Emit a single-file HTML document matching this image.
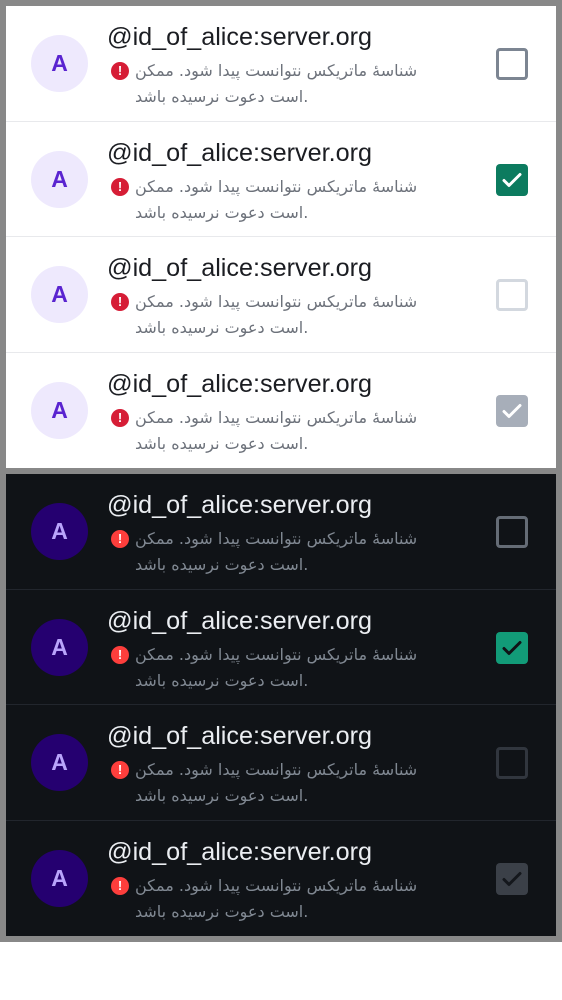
<!DOCTYPE html>
<html><head><meta charset="utf-8"><style>
*{margin:0;padding:0;box-sizing:border-box}
body{width:562px;height:1000px;background:#fff;position:relative;font-family:"Liberation Sans","DejaVu Sans",sans-serif;overflow:hidden}
.frame{position:absolute;left:0;width:562px;background:#888}
.panel{position:absolute;left:6px;width:550px}
.row{position:absolute;left:0;width:550px;height:115.5px}
.sep{position:absolute;left:0;width:550px;height:1px;bottom:0}
.av{position:absolute;left:25px;top:29px;width:57px;height:57px;border-radius:50%;text-align:center;line-height:57px;font-weight:bold;font-size:23px}
.t{position:absolute;left:101px;top:17px;font-size:25.2px;white-space:nowrap}
.ic{position:absolute;left:105px;top:56px;width:18px;height:18px;border-radius:50%;color:#fff;font-weight:bold;font-size:13px;text-align:center;line-height:18px}
.d{position:absolute;left:129px;top:52px;width:300px;font-size:16px;line-height:26px;font-family:"DejaVu Sans",sans-serif;direction:ltr;text-align:left}
.cb{position:absolute;left:490px;top:42px;width:32px;height:32px;border-radius:4px}
.cb svg{position:absolute;left:4px;top:4px}
.L{background:#fff}.L .sep{background:#e8e9ec}.L .t{color:#1b1d22}.L .d{color:#6d727b}.L .av{background:#eee9fd;color:#5a24d0}.L .ic{background:#d61d36}
.D{background:#101317}.D .sep{background:#22262d}.D .t{color:#ebeef2}.D .d{color:#808892}.D .av{background:#250070;color:#b9a4fb}.D .ic{background:#fd3e3c}
</style></head><body>
<div class="frame" style="top:0;height:474px"></div>
<div class="frame" style="top:468px;height:474px"></div>

<div class="panel L" style="top:6px;height:462px">
 <div class="row" style="top:0"><div class="av">A</div><div class="t">@id_of_alice:server.org</div><div class="ic">!</div><div class="d">شناسهٔ ماتریکس نتوانست پیدا شود. ممکن است دعوت نرسیده باشد.</div><div class="cb" style="border:3px solid #7c8592"></div><div class="sep"></div></div>
 <div class="row" style="top:115.5px"><div class="av">A</div><div class="t">@id_of_alice:server.org</div><div class="ic">!</div><div class="d">شناسهٔ ماتریکس نتوانست پیدا شود. ممکن است دعوت نرسیده باشد.</div><div class="cb" style="background:#0c7b5f"><svg width="24" height="24" viewBox="0 0 24 24"><path d="M4 12.5l5 5L20 6.5" fill="none" stroke="#fff" stroke-width="3" stroke-linecap="round" stroke-linejoin="round"/></svg></div><div class="sep"></div></div>
 <div class="row" style="top:231px"><div class="av">A</div><div class="t">@id_of_alice:server.org</div><div class="ic">!</div><div class="d">شناسهٔ ماتریکس نتوانست پیدا شود. ممکن است دعوت نرسیده باشد.</div><div class="cb" style="border:3px solid #d3d8df"></div><div class="sep"></div></div>
 <div class="row" style="top:346.5px"><div class="av">A</div><div class="t">@id_of_alice:server.org</div><div class="ic">!</div><div class="d">شناسهٔ ماتریکس نتوانست پیدا شود. ممکن است دعوت نرسیده باشد.</div><div class="cb" style="background:#a7aeb9"><svg width="24" height="24" viewBox="0 0 24 24"><path d="M4 12.5l5 5L20 6.5" fill="none" stroke="#fff" stroke-width="3" stroke-linecap="round" stroke-linejoin="round"/></svg></div></div>
</div>

<div class="panel D" style="top:474px;height:462px">
 <div class="row" style="top:0"><div class="av">A</div><div class="t">@id_of_alice:server.org</div><div class="ic">!</div><div class="d">شناسهٔ ماتریکس نتوانست پیدا شود. ممکن است دعوت نرسیده باشد.</div><div class="cb" style="border:3px solid #656c76"></div><div class="sep"></div></div>
 <div class="row" style="top:115.5px"><div class="av">A</div><div class="t">@id_of_alice:server.org</div><div class="ic">!</div><div class="d">شناسهٔ ماتریکس نتوانست پیدا شود. ممکن است دعوت نرسیده باشد.</div><div class="cb" style="background:#129b78"><svg width="24" height="24" viewBox="0 0 24 24"><path d="M4 12.5l5 5L20 6.5" fill="none" stroke="#101317" stroke-width="3" stroke-linecap="round" stroke-linejoin="round"/></svg></div><div class="sep"></div></div>
 <div class="row" style="top:231px"><div class="av">A</div><div class="t">@id_of_alice:server.org</div><div class="ic">!</div><div class="d">شناسهٔ ماتریکس نتوانست پیدا شود. ممکن است دعوت نرسیده باشد.</div><div class="cb" style="border:3px solid #31363e"></div><div class="sep"></div></div>
 <div class="row" style="top:346.5px"><div class="av">A</div><div class="t">@id_of_alice:server.org</div><div class="ic">!</div><div class="d">شناسهٔ ماتریکس نتوانست پیدا شود. ممکن است دعوت نرسیده باشد.</div><div class="cb" style="background:#3b4048"><svg width="24" height="24" viewBox="0 0 24 24"><path d="M4 12.5l5 5L20 6.5" fill="none" stroke="#14171c" stroke-width="3" stroke-linecap="round" stroke-linejoin="round"/></svg></div></div>
</div>
</body></html>
